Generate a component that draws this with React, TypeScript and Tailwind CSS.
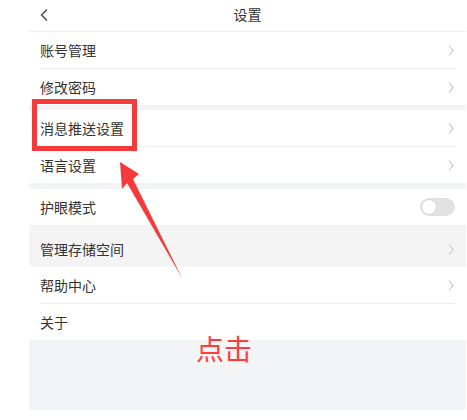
import React from "react";

const font = { fontFamily: '"Noto Sans CJK SC", "Noto Sans", sans-serif' };

function Chevron() {
  return (
    <svg width="6" height="11" viewBox="0 0 6 11" className="shrink-0">
      <polyline points="1,0.5 5,5.5 1,10.5" fill="none" stroke="#c4c4c4" strokeWidth="1.1" />
    </svg>
  );
}

function Row({
  label,
  divider,
  h = "h-[36px]",
  bg = "bg-white",
  right,
}: {
  label: string;
  divider?: boolean;
  h?: string;
  bg?: string;
  right?: React.ReactNode;
}) {
  return (
    <div className={`${bg} px-[11px]`}>
      <div className={`flex items-center justify-between ${h} ${divider ? "border-b border-[#efefef]" : ""}`}>
        <span className="text-[14px] text-[#333]">{label}</span>
        {right ?? (
          <span className="pr-[1px]">
            <Chevron />
          </span>
        )}
      </div>
    </div>
  );
}

function Toggle() {
  return (
    <div className="w-[35px] h-[18px] rounded-full bg-[#e2e2e2] flex items-center pl-[1px]">
      <div className="w-[16px] h-[16px] rounded-full bg-white border border-[#d6d6d6]" />
    </div>
  );
}

export default function App() {
  return (
    <div className="relative w-[467px] h-[420px] bg-white overflow-hidden" style={font}>
      <div className="ml-[29px] w-[437px]">
        <div className="relative h-[32px] border-b border-[#efefef] flex items-center justify-center">
          <svg width="8" height="12" viewBox="0 0 8 12" className="absolute left-[11px] top-[9px]">
            <polyline points="7,0.5 1.5,6 7,11.5" fill="none" stroke="#444" strokeWidth="1.3" />
          </svg>
          <span className="text-[14px] text-[#333] -mt-[2px]">设置</span>
        </div>
        <Row label="账号管理" divider h="h-[37px]" />
        <Row label="修改密码" />
        <div className="h-[5px] bg-[#f2f3f5]" />
        <Row label="消息推送设置" divider h="h-[37px]" />
        <Row label="语言设置" />
        <div className="h-[6px] bg-[#f2f3f5]" />
        <Row label="护眼模式" right={<Toggle />} />
        <Row label="管理存储空间" h="h-[42px] pt-[6px]" bg="bg-[#f4f4f4]" />
        <Row label="帮助中心" divider h="h-[37px]" />
        <Row label="关于" right={<span />} />
        <div className="h-[70px] bg-[#f3f4f6]" />
      </div>

      {/* annotation overlay */}
      <div className="absolute left-[32px] top-[99px] w-[105px] h-[52px] border-[5px] border-[#f43a3a]" />
      <svg className="absolute left-0 top-0" width="467" height="420" viewBox="0 0 467 420">
        <polygon
          points="120,162 139,174 133,179 182,278 127,183 122,189"
          fill="#f43a3a"
        />
      </svg>
      <span className="absolute left-[196px] top-[330px] text-[28px] leading-[36px] text-[#ff3d3d]">
        点击
      </span>
    </div>
  );
}
